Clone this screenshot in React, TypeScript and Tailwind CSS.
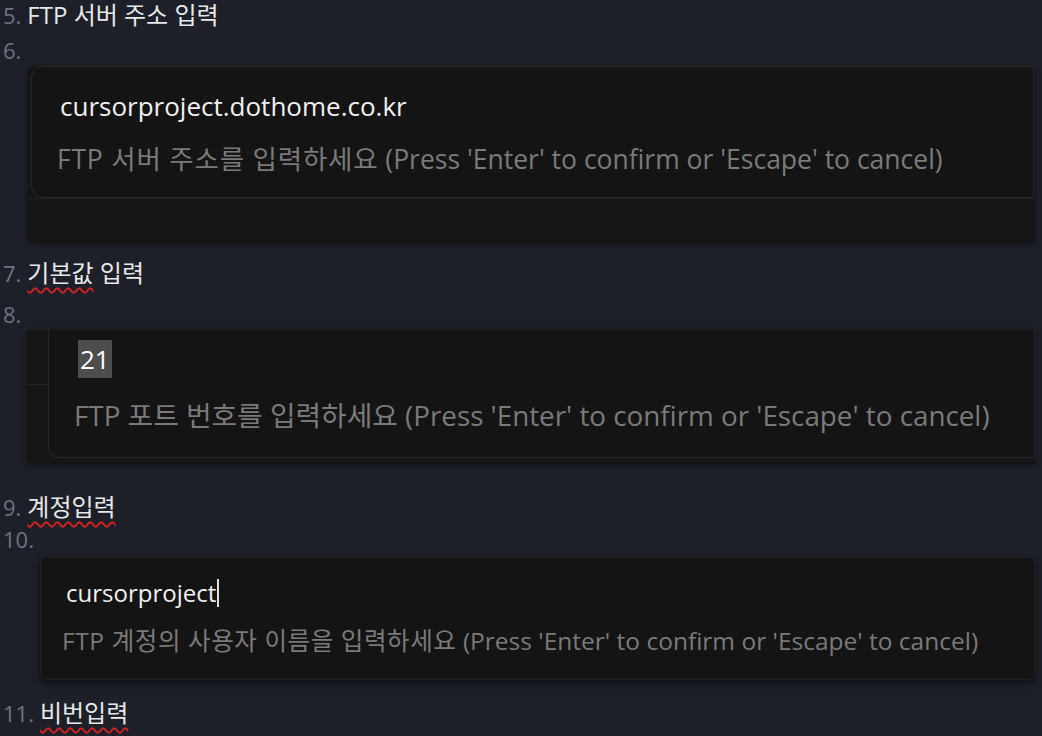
import React from "react";

const font = { fontFamily: '"Open Sans", "Noto Sans CJK KR", sans-serif' };

function Line({ n, children, h = "" }: { n: string; children?: React.ReactNode; h?: string }) {
  return (
    <div className={`flex items-center h-[30px] ${h} leading-none whitespace-nowrap`}>
      <span className="text-[#6b7380] pl-[3px] pr-[6px] text-[22px]">{n}</span>
      <span className="text-[#e8e8e8] text-[24px]">{children}</span>
    </div>
  );
}

function Squig({ children }: { children: React.ReactNode }) {
  return (
    <span className="underline decoration-wavy decoration-[#d42020] decoration-[1.5px] underline-offset-[5px]">
      {children}
    </span>
  );
}

const hint = "(Press 'Enter' to confirm or 'Escape' to cancel)";

export default function App() {
  return (
    <div className="w-[1042px] h-[736px] overflow-hidden bg-[#1d2028]" style={font}>
      <div className="flex flex-col">
        <Line n="5.">FTP 서버 주소 입력</Line>
        <Line n="6." h="mt-[5px]" />
        {/* Card 1 */}
        <div className="mt-[1px] ml-[28px] mr-[8px] h-[176px] bg-[#161616] rounded-[4px] flex flex-col shadow-[0_2px_6px_rgba(0,0,0,0.5)]">
          <div className="ml-[3px] h-[132px] bg-[#141414] border border-[#262626] rounded-l-[12px] flex flex-col pl-[25px] whitespace-nowrap">
            <div className="h-[26px] mt-[26px] text-[26px] leading-none text-[#f0f0f0] pl-[3px] flex items-center">cursorproject.dothome.co.kr</div>
            <div className="h-[26px] mt-[27px] text-[26.5px] leading-none text-[#7a7a7a] flex items-center">
              <span className="tracking-[0.8px]">FTP 서버 주소를 입력하세요</span>&nbsp;{hint}
            </div>
          </div>
          <div className="flex-1 bg-[#151515] border-t border-[#202020] rounded-b-[4px]" />
        </div>
        <Line n="7." h="mt-[16px]"><Squig>기본값</Squig> 입력</Line>
        <Line n="8." h="mt-[11px]" />
        {/* Card 2 */}
        <div className="mt-[1px] ml-[27px] mr-[7px] h-[133px] bg-[#151515] flex shadow-[0_2px_6px_rgba(0,0,0,0.5)]">
          <div className="w-[21px] flex flex-col">
            <div className="h-[55px] border-b border-[#222]" />
          </div>
          <div className="flex-1 h-[128px] bg-[#141414] border border-[#262626] border-t-0 rounded-bl-[12px] flex flex-col pl-[25px] whitespace-nowrap">
            <div className="mt-[10px] h-[38px] flex items-center">
              <span className="ml-[4px] bg-[#4d4d4d] h-[38px] px-[2px] text-[26px] leading-none text-white flex items-center">21</span>
            </div>
            <div className="h-[26px] mt-[25px] text-[27.8px] leading-none text-[#7a7a7a] flex items-center">FTP 포트 번호를 입력하세요 {hint}</div>
          </div>
        </div>
        <Line n="9." h="mt-[29px]"><Squig>계정입력</Squig></Line>
        <Line n="10." h="mt-[2px]" />
        {/* Card 3 */}
        <div className="mt-[3px] ml-[40px] mr-[7px] h-[123px] bg-[#141414] rounded-[6px] border border-[#1f1f1f] shadow-[0_3px_8px_rgba(0,0,0,0.55)] flex flex-col pl-[21px] whitespace-nowrap">
          <div className="h-[26px] mt-[22px] text-[24px] leading-none text-[#f0f0f0] pl-[4px] flex items-center">
            cursorproject<span className="inline-block w-[1.5px] h-[28px] bg-[#e0e0e0] ml-[1px]" />
          </div>
          <div className="h-[26px] mt-[22px] text-[24.5px] leading-none text-[#7a7a7a] flex items-center">
            <span className="tracking-[0.6px]">FTP 계정의 사용자 이름을 입력하세요</span>&nbsp;{hint}
          </div>
        </div>
        <Line n="11." h="mt-[18px]"><Squig>비번입력</Squig></Line>
      </div>
    </div>
  );
}
